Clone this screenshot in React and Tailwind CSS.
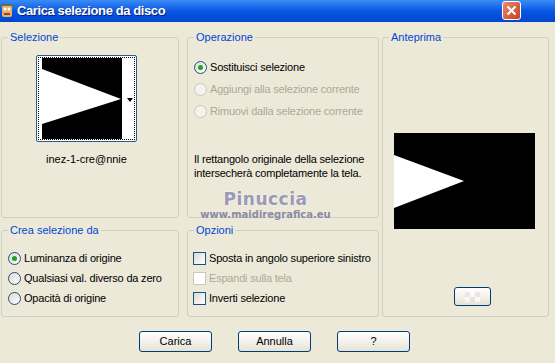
import React from "react";

const font = { fontFamily: '"Liberation Sans", Arial, sans-serif' };

function Radio({ checked, disabled, label, h = "h-[20px]" }) {
  return (
    <div className={"flex items-center whitespace-nowrap " + h}>
      <span
        className={
          "w-[13px] h-[13px] rounded-full border flex items-center justify-center shrink-0 " +
          (disabled
            ? "border-[#cac8bb] bg-[#f4f3ee]"
            : "border-[#1c5180] bg-gradient-to-br from-[#dcdad3] to-[#ffffff]")
        }
      >
        {checked && <span className="w-[5px] h-[5px] rounded-full bg-[#21a121]" />}
      </span>
      <span className={"ml-[3px] text-[11px] tracking-[-0.2px] " + (disabled ? "text-[#aca899]" : "text-black")}>{label}</span>
    </div>
  );
}

function Check({ disabled, label }) {
  return (
    <div className="flex items-center h-[20px] whitespace-nowrap">
      <span
        className={
          "w-[13px] h-[13px] border shrink-0 " +
          (disabled
            ? "border-[#cac8bb] bg-white"
            : "border-[#1c5180] bg-gradient-to-br from-[#dcdad3] to-[#ffffff]")
        }
      />
      <span className={"ml-[3px] text-[11px] tracking-[-0.2px] " + (disabled ? "text-[#aca899]" : "text-black")}>{label}</span>
    </div>
  );
}

function Group({ title, className, children }) {
  return (
    <div className={"relative border border-[#d0d0bf] rounded-[3px] " + className}>
      <span className="absolute -top-[8px] left-[6px] px-[2px] bg-[#ece9d8] text-[11px] leading-[14px] text-[#0046d5] whitespace-nowrap">
        {title}
      </span>
      {children}
    </div>
  );
}

function Btn({ children, className = "" }) {
  return (
    <button className={"w-[73px] h-[21px] rounded-[3px] border border-[#003c74] bg-gradient-to-b from-[#ffffff] to-[#e6e3d6] text-[11px] text-black flex items-center justify-center " + className}>
      {children}
    </button>
  );
}

export default function App() {
  return (
    <div className="w-[555px] h-[363px] bg-[#ece9d8] relative overflow-hidden" style={font}>
      {/* Title bar */}
      <div className="h-[22px] flex items-center bg-gradient-to-b from-[#3b8cf6] via-[#0757e3] to-[#0146cf] relative">
        <svg width="13" height="16" viewBox="0 0 13 16" className="ml-[1px]">
          <rect x="1" y="2" width="10" height="12" rx="2" fill="#e8b070" />
          <circle cx="4" cy="6" r="1.5" fill="#fff" />
          <circle cx="8" cy="6" r="1.5" fill="#fff" />
          <rect x="3" y="10" width="6" height="2" fill="#a04020" />
          <rect x="0" y="1" width="12" height="2" fill="#5a7a3a" />
        </svg>
        <span className="ml-[3px] text-white font-bold text-[13px] tracking-[-0.4px]" style={{ textShadow: "1px 1px #0a1f7a" }}>
          Carica selezione da disco
        </span>
        <div className="absolute left-[502px] top-[1px] w-[19px] h-[19px] rounded-[3px] border border-white bg-gradient-to-br from-[#e88a6a] to-[#c4401c] flex items-center justify-center">
          <svg width="11" height="11" viewBox="0 0 11 11">
            <path d="M1.5 1.5 L9.5 9.5 M9.5 1.5 L1.5 9.5" stroke="#fff" strokeWidth="2" />
          </svg>
        </div>
      </div>

      {/* Body */}
      <div className="flex pl-[1px] pt-[15px]">
        <div className="flex flex-col gap-[12px] w-[178px]">
          <Group title="Selezione" className="h-[181px]">
            <div className="flex flex-col items-center w-[101px] ml-[34px] pt-[17px]">
              <div className="w-[101px] h-[87px] border border-[#2a5b8c] rounded-[2px] bg-white flex items-center pl-[1px]">
                <div className="w-[97px] h-[83px] border border-dotted border-black flex items-center pl-[3px] relative">
                  <svg width="80" height="81" viewBox="0 0 80 81">
                    <rect width="80" height="81" fill="#000" />
                    <polygon points="0,11 79,41 0,66" fill="#fff" />
                  </svg>
                  <svg width="6" height="4" viewBox="0 0 6 4" className="absolute right-[1px] top-[40px]">
                    <polygon points="0,0 6,0 3,4" fill="#000" />
                  </svg>
                </div>
              </div>
              <div className="mt-[9px] text-[11px] text-black whitespace-nowrap">inez-1-cre@nnie</div>
            </div>
          </Group>
          <Group title="Crea selezione da" className="h-[87px]">
            <div className="pl-[6px] pt-[17px] flex flex-col">
              <Radio checked label="Luminanza di origine" />
              <Radio label="Qualsiasi val. diverso da zero" />
              <Radio label="Opacità di origine" />
            </div>
          </Group>
        </div>

        <div className="flex flex-col gap-[12px] w-[192px] ml-[8px]">
          <Group title="Operazione" className="h-[181px]">
            <div className="pl-[6px] pt-[18px] flex flex-col">
              <Radio checked h="h-[22px]" label="Sostituisci selezione" />
              <Radio disabled h="h-[22px]" label="Aggiungi alla selezione corrente" />
              <Radio disabled h="h-[22px]" label="Rimuovi dalla selezione corrente" />
              <p className="mt-[30px] text-[11px] leading-[14px] tracking-[-0.2px] text-black whitespace-nowrap">
                Il rettangolo originale della selezione
                <br />
                intersecherà completamente la tela.
              </p>
            </div>
          </Group>
          <Group title="Opzioni" className="h-[87px]">
            <div className="pl-[5px] pt-[17px] flex flex-col">
              <Check label="Sposta in angolo superiore sinistro" />
              <Check disabled label="Espandi sulla tela" />
              <Check label="Inverti selezione" />
            </div>
          </Group>
        </div>

        <Group title="Anteprima" className="w-[167px] h-[280px] ml-[3px]">
          <div className="flex flex-col items-start">
            <div className="mt-[95px] ml-[11px]">
              <svg width="141" height="96" viewBox="0 0 141 96">
                <rect width="141" height="96" fill="#000" />
                <polygon points="0,22 70,48 0,75" fill="#fff" />
              </svg>
            </div>
            <div className="mt-[58px] ml-[71px] w-[37px] h-[19px] rounded-[3px] border border-[#003c74] bg-gradient-to-b from-[#ffffff] to-[#e6e3d6] flex items-center justify-center">
              <div className="grid grid-cols-3 w-[15px] h-[10px] opacity-60">
                <span className="bg-[#e0e0e0]" /><span className="bg-white" /><span className="bg-[#e0e0e0]" />
                <span className="bg-white" /><span className="bg-[#e0e0e0]" /><span className="bg-white" />
              </div>
            </div>
          </div>
        </Group>
      </div>

      {/* Buttons */}
      <div className="flex pl-[139px] mt-[14px]">
        <Btn>Carica</Btn>
        <Btn className="ml-[26px]">Annulla</Btn>
        <Btn className="ml-[26px]">?</Btn>
      </div>

      {/* Watermark */}
      <div className="absolute left-[203px] top-[190px] w-[125px] flex flex-col items-center pointer-events-none">
        <span className="text-[17px] leading-[19px] font-bold tracking-[0.5px] text-[#9a9ab6]" style={{ fontFamily: '"DejaVu Sans", sans-serif', textShadow: "0 0 2px #fff" }}>
          Pinuccia
        </span>
        <span className="text-[10px] leading-[12px] font-bold text-[#8a8aa6]" style={{ fontFamily: '"DejaVu Sans", sans-serif' }}>
          www.maidiregrafica.eu
        </span>
      </div>
    </div>
  );
}
